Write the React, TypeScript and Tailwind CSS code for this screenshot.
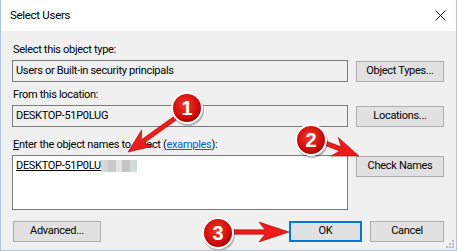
import React from "react";

const font = { fontFamily: 'Roboto, "Liberation Sans", sans-serif' };

const Btn = ({ label, className = "" }: { label: React.ReactNode; className?: string }) => (
  <div
    className={`h-[21px] flex items-center justify-center bg-[#e1e1e1] border border-[#adadad] text-[11px] tracking-[-0.3px] text-black ${className}`}
  >
    {label}
  </div>
);

const Badge = ({ cx, cy, n }: { cx: number; cy: number; n: string }) => (
  <g>
    <circle cx={cx + 1} cy={cy + 2} r={16} fill="rgba(0,0,0,0.25)" />
    <circle cx={cx} cy={cy} r={15} fill="url(#badgeFill)" stroke="#fff" strokeWidth={2} />
    <text
      x={cx}
      y={cy + 7}
      textAnchor="middle"
      fill="#fff"
      fontSize="20"
      fontWeight="700"
      fontFamily='"Liberation Sans", Arial, sans-serif'
    >
      {n}
    </text>
  </g>
);

// arrow along a line, tip at (x2,y2)
const Arrow = ({ x1, y1, x2, y2, head = 24, half = 10 }: { x1: number; y1: number; x2: number; y2: number; head?: number; half?: number }) => {
  const dx = x2 - x1;
  const dy = y2 - y1;
  const len = Math.hypot(dx, dy);
  const ux = dx / len;
  const uy = dy / len;
  const px = -uy;
  const py = ux;
  const bx = x2 - ux * head;
  const by = y2 - uy * head;
  const nx = x2 - ux * (head - 6);
  const ny = y2 - uy * (head - 6);
  const pts = [
    [x2, y2],
    [bx + px * half, by + py * half],
    [nx + px * 2.2, ny + py * 2.2],
    [x1 + px * 2.2, y1 + py * 2.2],
    [x1 - px * 2.2, y1 - py * 2.2],
    [nx - px * 2.2, ny - py * 2.2],
    [bx - px * half, by - py * half],
  ]
    .map((p) => p.join(","))
    .join(" ");
  return <polygon points={pts} fill="#ec1c1c" stroke="#b00000" strokeWidth={0.6} />;
};

export default function App() {
  return (
    <div
      className="relative w-[457px] h-[251px] overflow-hidden bg-[#f0f0f0] border-x border-b border-[#a9c6e6] text-[11px] tracking-[-0.3px] text-black"
      style={font}
    >
      {/* Title bar */}
      <div className="h-[31px] bg-white flex items-center justify-between pl-[9px] pr-[10px]">
        <span className="text-[11.5px]">Select Users</span>
        <svg width="11" height="11" viewBox="0 0 11 11">
          <path d="M0.5 0.5 L10.5 10.5 M10.5 0.5 L0.5 10.5" stroke="#111" strokeWidth="1" />
        </svg>
      </div>

      {/* Body */}
      <div className="pl-[11px] pr-[12px] pt-[11px] flex flex-col">
        <div className="h-[16px] leading-[16px] pl-[1px]">Select this object type:</div>
        <div className="flex gap-[8px] mt-[2px] items-start">
          <div className="flex-1 h-[22px] border border-[#7a7a7a] flex items-center pl-[3px]">
            Users or Built-in security principals
          </div>
          <Btn label="Object Types..." className="w-[88px] mt-[1px]" />
        </div>

        <div className="h-[16px] leading-[16px] pl-[1px] mt-[5px]">From this location:</div>
        <div className="flex gap-[8px] mt-[2px] items-start">
          <div className="flex-1 h-[22px] border border-[#7a7a7a] flex items-center pl-[3px]">
            DESKTOP-51P0LUG
          </div>
          <Btn label="Locations..." className="w-[88px] mt-[1px]" />
        </div>

        <div className="h-[16px] leading-[16px] pl-[1px] mt-[10px]">
          <span className="underline">E</span>nter the object names to select (
          <span className="text-[#0066cc] underline">examples</span>):
        </div>
        <div className="flex gap-[8px] mt-[2px] items-start">
          <div className="flex-1 h-[55px] border border-[#7a7a7a] bg-white pl-[3px] pt-[2px]">
            <div className="flex items-center h-[16px]">
              <span className="underline">DESKTOP-51P0LU</span>
              <span className="flex h-[12px]">
                <span className="w-[7px] bg-[#d6d6d6]" />
                <span className="w-[8px] bg-[#c9c9c9]" />
                <span className="w-[6px] bg-[#e3e3e3]" />
                <span className="w-[8px] bg-[#c4c4c4]" />
                <span className="w-[7px] bg-[#d0dcd8]" />
              </span>
            </div>
          </div>
          <Btn label="Check Names" className="w-[88px] mt-[1px]" />
        </div>

        <div className="flex items-center mt-[11px]">
          <Btn label="Advanced..." className="w-[88px] ml-[1px]" />
          <div className="flex-1" />
          <div className="w-[73px] h-[21px] flex items-center justify-center bg-[#e1e1e1] border-2 border-[#0078d7]">
            OK
          </div>
          <Btn label="Cancel" className="w-[74px] ml-[8px]" />
        </div>
      </div>

      {/* Resize grip */}
      <svg className="absolute right-[2px] bottom-[2px]" width="10" height="10" viewBox="0 0 10 10">
        {[
          [8, 0],
          [8, 3],
          [5, 3],
          [8, 6],
          [5, 6],
          [2, 6],
        ].map(([x, y], i) => (
          <rect key={i} x={x} y={y + 2} width="2" height="2" fill="#bcbcbc" />
        ))}
      </svg>

      {/* Annotations */}
      <svg className="absolute inset-0 pointer-events-none" width="457" height="251">
        <defs>
          <radialGradient id="badgeFill" cx="45%" cy="40%" r="60%">
            <stop offset="0%" stopColor="#f03a2a" />
            <stop offset="70%" stopColor="#d10c0c" />
            <stop offset="100%" stopColor="#9e0000" />
          </radialGradient>
        </defs>
        <Arrow x1={180} y1={114} x2={127} y2={152} head={24} half={10} />
        <Arrow x1={316} y1={140} x2={358} y2={156} head={26} half={10} />
        <Arrow x1={228} y1={232} x2={288} y2={232} head={30} half={10} />
        <Badge cx={186} cy={108} n="1" />
        <Badge cx={310} cy={140} n="2" />
        <Badge cx={217} cy={233} n="3" />
      </svg>
    </div>
  );
}
